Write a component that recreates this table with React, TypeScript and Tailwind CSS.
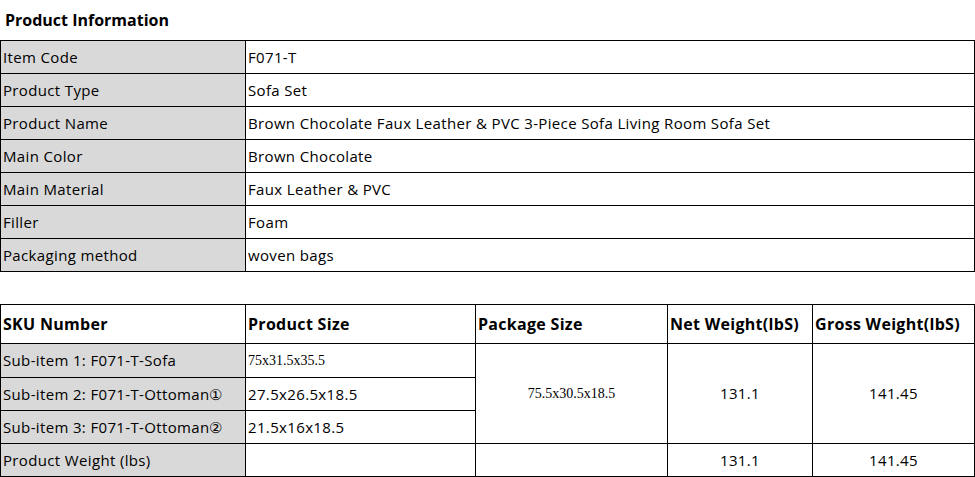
import React from "react";

const info: [string, string][] = [
  ["Item Code", "F071-T"],
  ["Product Type", "Sofa Set"],
  ["Product Name", "Brown Chocolate Faux Leather & PVC 3-Piece Sofa Living Room Sofa Set"],
  ["Main Color", "Brown Chocolate"],
  ["Main Material", "Faux Leather & PVC"],
  ["Filler", "Foam"],
  ["Packaging method", "woven bags"],
];

const sans = "font-['Segoe_UI','Open_Sans',sans-serif]";
const serif = "font-['Liberation_Serif','Times_New_Roman',serif] text-[14px] tracking-normal";

export default function App() {
  return (
    <div className={`w-[975px] h-[477px] bg-white text-black ${sans} text-[15px] tracking-[0.35px] overflow-hidden`}>
      <div className="h-[40px] pl-[5px] pt-[8px] font-bold text-[16px] leading-[24px] tracking-normal">Product Information</div>
      <table className="border-collapse w-[975px] table-fixed">
        <colgroup>
          <col className="w-[245px]" />
          <col />
        </colgroup>
        <tbody>
          {info.map(([k, v]) => (
            <tr key={k} className="h-[33px]">
              <td className="border border-black bg-[#d9d9d9] px-[2px] py-0 leading-[20px]">{k}</td>
              <td className="border border-black px-[2px] py-0 leading-[20px]">{v}</td>
            </tr>
          ))}
        </tbody>
      </table>
      <div className="h-[32px]" />
      <table className="border-collapse w-[975px] table-fixed">
        <colgroup>
          <col className="w-[245px]" />
          <col className="w-[230px]" />
          <col className="w-[192px]" />
          <col className="w-[145px]" />
          <col />
        </colgroup>
        <tbody>
          <tr className="h-[39px] font-bold text-[16px] tracking-[0.3px]">
            <td className="border border-black px-[2px]">SKU Number</td>
            <td className="border border-black px-[2px]">Product Size</td>
            <td className="border border-black px-[2px]">Package Size</td>
            <td className="border border-black px-[2px]">Net Weight(lbS)</td>
            <td className="border border-black px-[2px]">Gross Weight(lbS)</td>
          </tr>
          <tr className="h-[34px]">
            <td className="border border-black bg-[#d9d9d9] px-[2px]">Sub-item 1: F071-T-Sofa</td>
            <td className={`border border-black px-[2px] ${serif}`}>75x31.5x35.5</td>
            <td rowSpan={3} className={`border border-black px-[2px] text-center ${serif}`}>75.5x30.5x18.5</td>
            <td rowSpan={3} className="border border-black px-[2px] text-center">131.1</td>
            <td rowSpan={3} className="border border-black px-[2px] text-center">141.45</td>
          </tr>
          <tr className="h-[33px]">
            <td className="border border-black bg-[#d9d9d9] px-[2px]">Sub-item 2: F071-T-Ottoman①</td>
            <td className="border border-black px-[2px]">27.5x26.5x18.5</td>
          </tr>
          <tr className="h-[33px]">
            <td className="border border-black bg-[#d9d9d9] px-[2px]">Sub-item 3: F071-T-Ottoman②</td>
            <td className="border border-black px-[2px]">21.5x16x18.5</td>
          </tr>
          <tr className="h-[33px]">
            <td className="border border-black bg-[#d9d9d9] px-[2px]">Product Weight (lbs)</td>
            <td className="border border-black px-[2px]"></td>
            <td className="border border-black px-[2px]"></td>
            <td className="border border-black px-[2px] text-center">131.1</td>
            <td className="border border-black px-[2px] text-center">141.45</td>
          </tr>
        </tbody>
      </table>
    </div>
  );
}
